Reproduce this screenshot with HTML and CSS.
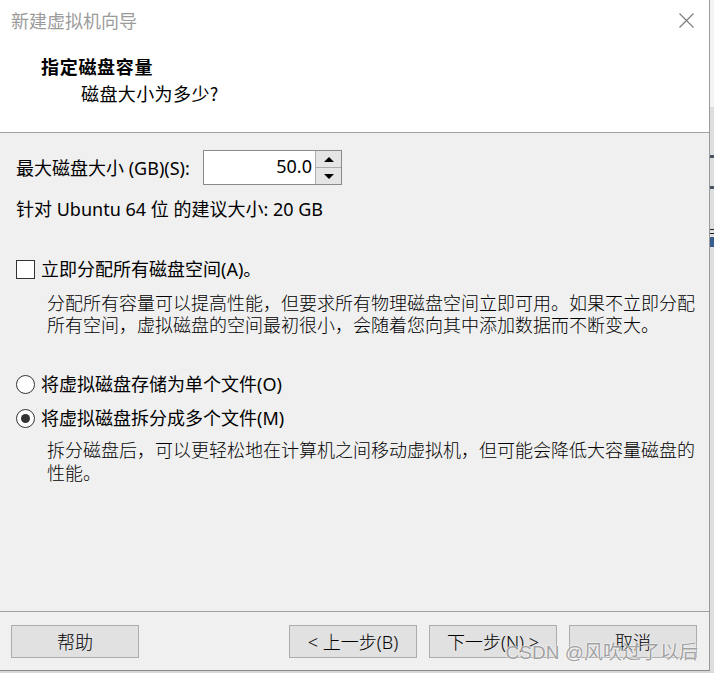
FILE: index.html
```html
<!DOCTYPE html>
<html lang="zh-CN">
<head>
<meta charset="utf-8">
<title>新建虚拟机向导</title>
<link rel="stylesheet" href="styles.css">
</head>
<body>
<div class="screen">
  <div class="dialog">
    <header class="header">
      <div class="titlebar">
        <span class="title">新建虚拟机向导</span>
        <svg class="close" viewBox="0 0 15 15" width="15" height="15"><path d="M0.5 0.5L14.5 14.5M14.5 0.5L0.5 14.5" stroke="#7a7a7a" stroke-width="1.1" fill="none"/></svg>
      </div>
      <div class="heading">指定磁盘容量</div>
      <div class="subheading">磁盘大小为多少?</div>
    </header>
    <main class="content">
      <div class="size-row">
        <span class="size-label">最大磁盘大小 (GB)(S):</span>
        <div class="spin">
          <span class="spin-value">50.0</span>
          <div class="spin-btns">
            <span class="spin-btn"><span class="tri-up"></span></span>
            <span class="spin-btn"><span class="tri-down"></span></span>
          </div>
        </div>
      </div>
      <div class="recommend">针对 Ubuntu 64 位 的建议大小: 20 GB</div>
      <div class="option opt-check"><span class="checkbox"></span><span>立即分配所有磁盘空间(A)。</span></div>
      <p class="desc desc-check">分配所有容量可以提高性能，但要求所有物理磁盘空间立即可用。如果不立即分配<br>所有空间，虚拟磁盘的空间最初很小，会随着您向其中添加数据而不断变大。</p>
      <div class="option opt-radio1"><span class="radio"></span><span>将虚拟磁盘存储为单个文件(O)</span></div>
      <div class="option opt-radio2"><span class="radio checked"></span><span>将虚拟磁盘拆分成多个文件(M)</span></div>
      <p class="desc desc-split">拆分磁盘后，可以更轻松地在计算机之间移动虚拟机，但可能会降低大容量磁盘的<br>性能。</p>
    </main>
    <footer class="footer">
      <span class="btn btn-help">帮助</span>
      <span class="btn">&lt; 上一步(B)</span>
      <span class="btn">下一步(N) &gt;</span>
      <span class="btn">取消</span>
    </footer>
    <div class="watermark">CSDN @风吹过了以后</div>
  </div>
  <div class="side-strip">
    <span class="strip-top"></span>
    <span class="strip-mark mark1"></span>
    <span class="strip-mark mark2"></span>
    <span class="strip-line"></span>
    <span class="strip-glyph"></span>
  </div>
</div>
</body>
</html>
```
FILE: styles.css
```css
html, body {
  margin: 0;
  padding: 0;
}
body {
  width: 714px;
  height: 673px;
  overflow: hidden;
  background: #d8d8d8;
  color: #000;
  font-family: "Noto Sans", "Noto Sans CJK SC", sans-serif;
}
.screen {
  display: flex;
  height: 673px;
}
.dialog {
  position: relative;
  flex: none;
  width: 710px;
  height: 671px;
  box-sizing: border-box;
  border-right: 1px solid #9a9a9a;
  border-bottom: 1px solid #8a8a8a;
  background: #f0f0f0;
  display: flex;
  flex-direction: column;
}
.header {
  height: 133px;
  box-sizing: border-box;
  background: #fff;
  border-bottom: 1px solid #a0a0a0;
}
.titlebar {
  height: 40px;
  display: flex;
  align-items: center;
  justify-content: space-between;
  padding: 0 15px 0 11px;
}
.title {
  font-family: "Noto Sans CJK SC", sans-serif;
  font-size: 18px;
  line-height: 24px;
  color: #9b9b9b;
}
.close {
  display: block;
  margin-top: 1px;
}
.heading {
  margin-top: 14px;
  padding-left: 41px;
  font-family: "Noto Sans CJK SC", sans-serif;
  font-size: 18px;
  line-height: 24px;
  font-weight: bold;
  letter-spacing: 0.7px;
}
.subheading {
  margin-top: 3px;
  padding-left: 81px;
  font-family: "Noto Sans CJK SC", sans-serif;
  font-size: 18px;
  line-height: 24px;
  letter-spacing: 0.4px;
}
.content {
  padding-left: 16px;
  display: flex;
  flex-direction: column;
}
.size-row {
  margin-top: 17px;
  height: 35px;
  display: flex;
  align-items: center;
}
.size-label {
  width: 187px;
  font-size: 18px;
  line-height: 24px;
}
.spin {
  display: flex;
  width: 139px;
  height: 35px;
  box-sizing: border-box;
  border: 1px solid #8a8a8a;
  background: #fff;
}
.spin-value {
  flex: 1;
  text-align: right;
  padding-right: 3px;
  font-size: 18px;
  line-height: 31px;
}
.spin-btns {
  width: 25px;
  display: flex;
  flex-direction: column;
  border-left: 1px solid #adadad;
}
.spin-btn {
  flex: 1;
  background: #e5e5e5;
  display: flex;
  align-items: center;
  justify-content: center;
}
.spin-btn + .spin-btn {
  border-top: 1px solid #adadad;
}
.tri-up {
  width: 0;
  height: 0;
  border-left: 5px solid transparent;
  border-right: 5px solid transparent;
  border-bottom: 5px solid #000;
}
.tri-down {
  width: 0;
  height: 0;
  border-left: 5px solid transparent;
  border-right: 5px solid transparent;
  border-top: 5px solid #000;
}
.recommend {
  margin-top: 12px;
  font-size: 18px;
  line-height: 24px;
}
.option {
  height: 24px;
  display: flex;
  align-items: center;
  gap: 6px;
  font-size: 18px;
  line-height: 24px;
}
.opt-check {
  margin-top: 36px;
}
.opt-radio1 {
  margin-top: 37px;
}
.opt-radio2 {
  margin-top: 10px;
}
.checkbox {
  flex: none;
  width: 19px;
  height: 19px;
  box-sizing: border-box;
  border: 1px solid #333;
  background: #fff;
}
.radio {
  flex: none;
  width: 19px;
  height: 19px;
  box-sizing: border-box;
  border: 1px solid #333;
  border-radius: 50%;
  background: #fff;
  display: flex;
  align-items: center;
  justify-content: center;
}
.radio.checked::after {
  content: "";
  width: 9px;
  height: 9px;
  border-radius: 50%;
  background: #333;
}
.desc {
  margin: 10px 0 0 31px;
  white-space: nowrap;
  font-family: "Noto Sans CJK SC", sans-serif;
  font-weight: 300;
  font-size: 18px;
  line-height: 22px;
  letter-spacing: 0;
}
.desc-split {
  margin-top: 8px;
  line-height: 23px;
}
.footer {
  margin-top: auto;
  border-top: 1px solid #a0a0a0;
  padding: 13px 12px 12px 11px;
  display: flex;
  gap: 12px;
}
.btn {
  width: 128px;
  height: 33px;
  box-sizing: border-box;
  border: 1px solid #adadad;
  background: #e1e1e1;
  display: flex;
  align-items: center;
  justify-content: center;
  font-size: 18px;
  line-height: 24px;
  font-weight: 300;
}
.btn-help {
  margin-right: auto;
}
.watermark {
  position: absolute;
  right: 11px;
  top: 640px;
  font-family: "Liberation Sans", "Noto Sans CJK SC", sans-serif;
  font-size: 19px;
  line-height: 26px;
  color: rgba(120, 120, 120, 0.7);
  text-shadow: 0 0 1px #fff, 0 0 2px #fff;
  white-space: nowrap;
}
.side-strip {
  flex: 1;
  display: flex;
  flex-direction: column;
  background: #dedede;
  height: 671px;
}
.strip-top {
  height: 107px;
  background: #f4f4f4;
}
.strip-mark {
  height: 3px;
  background: #4a5560;
}
.mark1 {
  margin-top: 48px;
}
.mark2 {
  margin-top: 28px;
}
.strip-line {
  margin-top: 40px;
  height: 3px;
  border-top: 1px solid #222;
  border-bottom: 1px solid #222;
}
.strip-glyph {
  margin-top: 3px;
  height: 10px;
  background: #3a5e8c;
}
```
